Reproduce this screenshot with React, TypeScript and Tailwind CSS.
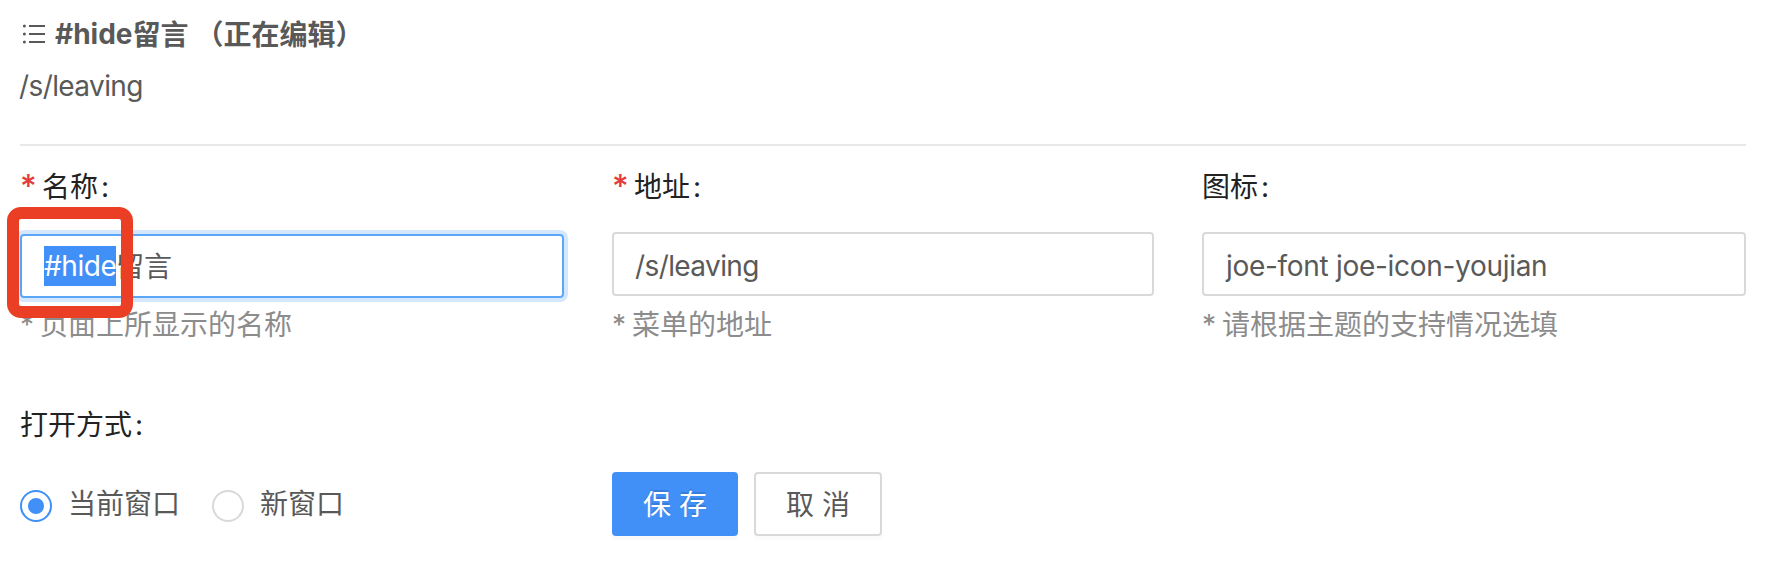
import type { ReactNode } from "react";

function Label({ required, children }: { required?: boolean; children: ReactNode }) {
  return (
    <label className="flex h-11 items-center pt-px leading-[44px] text-[#222222]">
      {required && <span className="mr-2 w-3.5 text-[32px] font-medium text-[#e33c39]">*</span>}
      <span>{children}</span>
      <span className="ml-[3px]">:</span>
    </label>
  );
}

function Hint({ children }: { children: ReactNode }) {
  return (
    <p className="flex h-11 items-center pt-0.5 leading-[44px] text-[#8c8c8c]">
      <span className="w-5">*</span>
      <span>{children}</span>
    </p>
  );
}

function Field({
  label,
  hint,
  required,
  focused,
  children,
}: {
  label: string;
  hint: string;
  required?: boolean;
  focused?: boolean;
  children: ReactNode;
}) {
  return (
    <div className="flex flex-col">
      <Label required={required}>{label}</Label>
      <div
        className={
          focused
            ? "mt-[26px] flex h-16 items-center rounded border-2 border-[#5aa6f8] pl-[22px] shadow-[0_0_0_4px_#d4e7fd]"
            : "mt-6 mb-0.5 flex h-16 items-center rounded border-2 border-[#d9d9d9] pt-[3px] pl-[21px]"
        }
      >
        {children}
      </div>
      <div className="mt-1">
        <Hint>{hint}</Hint>
      </div>
    </div>
  );
}

function Radio({ checked, children }: { checked?: boolean; children: ReactNode }) {
  return (
    <label className="flex items-center">
      <span
        className={
          checked
            ? "mt-0.5 flex size-8 items-center justify-center rounded-full border-2 border-[#4190f7]"
            : "mt-0.5 flex size-8 rounded-full border-2 border-[#d9d9d9]"
        }
      >
        {checked && <span className="size-4 rounded-full bg-[#4190f7]" />}
      </span>
      <span className="-mt-0.5 pr-4 pl-4 leading-[44px]">{children}</span>
    </label>
  );
}

export default function App() {
  return (
    <main className="relative h-[562px] w-[1766px] overflow-hidden bg-white px-5 pt-3 font-[Inter,'Noto_Sans_CJK_SC',sans-serif] text-[28px] text-[#595959]">
      <header className="h-[134px] border-b-2 border-[#e8e8e8]">
        <h1 className="flex h-11 items-center font-bold leading-[44px]">
          <svg viewBox="0 0 24 20" className="mr-[9px] ml-[2px] h-5 w-6" fill="currentColor">
            <path d="M7 1h16v2H7zM7 9h16v2H7zM7 17h16v2H7z" />
            <circle cx="2.4" cy="2" r="1.5" />
            <circle cx="2.4" cy="10" r="1.5" />
            <circle cx="2.4" cy="18" r="1.5" />
          </svg>
          <span>#hide</span>
          <span className="pt-px">留言</span>
          <span className="ml-[7px] pt-px">（正在编辑）</span>
        </h1>
        <p className="mt-2 -ml-px h-11 leading-[44px] tracking-[-0.6px]">/s/leaving</p>
      </header>

      <section className="mt-[18px] grid grid-cols-[544px_542px_544px] gap-x-12">
        <Field label="名称" hint="页面上所显示的名称" required focused>
          <span className="h-10 w-[72px] bg-[#4190f7] leading-[41px] tracking-[-0.4px] text-white">#hide</span>
          <span className="pt-px leading-10">留言</span>
        </Field>
        <Field label="地址" hint="菜单的地址" required>
          <span className="tracking-[-0.6px]">/s/leaving</span>
        </Field>
        <Field label="图标" hint="请根据主题的支持情况选填">
          <span className="ml-px tracking-[-0.3px]">joe-font joe-icon-youjian</span>
        </Field>
      </section>

      <section className="mt-14 grid grid-cols-[544px_542px_544px] gap-x-12">
        <div>
          <Label>打开方式</Label>
          <div className="mt-[38px] flex gap-4">
            <Radio checked>当前窗口</Radio>
            <Radio>新窗口</Radio>
          </div>
        </div>
        <div className="flex gap-4 pt-[70px]">
          <button className="flex h-16 w-[126px] items-center justify-center gap-2 rounded bg-[#4190f7] pt-0.5 text-white shadow-[0_4px_0_rgba(0,0,0,0.02)] [text-shadow:0_-2px_0_rgba(0,0,0,0.12)]">
            <span>保</span>
            <span>存</span>
          </button>
          <button className="flex h-16 w-32 items-center justify-center gap-2 rounded border-2 border-[#d9d9d9] bg-white pt-0.5 shadow-[0_4px_0_rgba(0,0,0,0.015)]">
            <span>取</span>
            <span>消</span>
          </button>
        </div>
      </section>

      <div className="absolute top-[207px] left-[7px] h-[111px] w-[126px] rounded-[14px] border-[12px] border-[#eb3f25]" />
    </main>
  );
}
